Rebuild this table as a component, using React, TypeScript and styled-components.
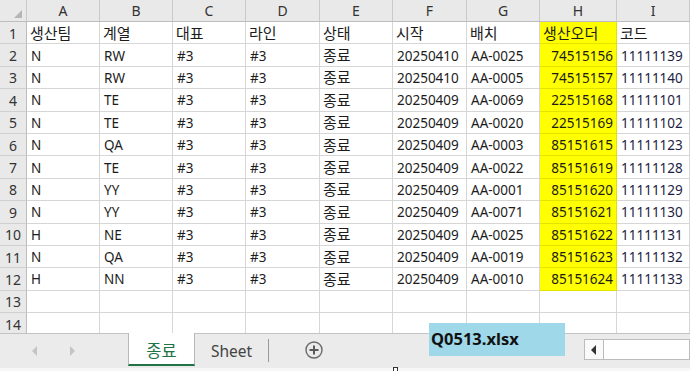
import React from "react";
import styled, { createGlobalStyle } from "styled-components";

/* -------------------------------------------------------------------------- */

const GlobalStyle = createGlobalStyle`
  html, body {
    margin: 0;
    padding: 0;
    background: #ffffff;
  }
  * {
    box-sizing: border-box;
  }
`;

const COLUMNS = ["A", "B", "C", "D", "E", "F", "G", "H", "I"];
// row header, A..I, and a trailing column that runs off the window
const COL_WIDTHS = "27px 73px 73px 73px 74px 73px 74px 73px 77px 73px 40px";

const ROWS: string[][] = [
  ["생산팀", "계열", "대표", "라인", "상태", "시작", "배치", "생산오더", "코드"],
  ["N", "RW", "#3", "#3", "종료", "20250410", "AA-0025", "74515156", "11111139"],
  ["N", "RW", "#3", "#3", "종료", "20250410", "AA-0005", "74515157", "11111140"],
  ["N", "TE", "#3", "#3", "종료", "20250409", "AA-0069", "22515168", "11111101"],
  ["N", "TE", "#3", "#3", "종료", "20250409", "AA-0020", "22515169", "11111102"],
  ["N", "QA", "#3", "#3", "종료", "20250409", "AA-0003", "85151615", "11111123"],
  ["N", "TE", "#3", "#3", "종료", "20250409", "AA-0022", "85151619", "11111128"],
  ["N", "YY", "#3", "#3", "종료", "20250409", "AA-0001", "85151620", "11111129"],
  ["N", "YY", "#3", "#3", "종료", "20250409", "AA-0071", "85151621", "11111130"],
  ["H", "NE", "#3", "#3", "종료", "20250409", "AA-0025", "85151622", "11111131"],
  ["N", "QA", "#3", "#3", "종료", "20250409", "AA-0019", "85151623", "11111132"],
  ["H", "NN", "#3", "#3", "종료", "20250409", "AA-0010", "85151624", "11111133"],
  ["", "", "", "", "", "", "", "", ""],
  ["", "", "", "", "", "", "", "", ""],
];

const isKorean = (s: string) => /[가-힣]/.test(s);

/* ------------------------------- Layout ----------------------------------- */

const Window = styled.div`
  position: relative;
  width: 690px;
  height: 371px;
  overflow: hidden;
  display: flex;
  flex-direction: column;
  font-family: "Noto Sans", "Noto Sans CJK KR", sans-serif;
  font-size: 13.5px;
  color: #1c1c1c;
  background: #ffffff;
`;

const Sheet = styled.div`
  height: 333px;
  flex-shrink: 0;
  overflow: hidden;
  display: grid;
  grid-template-columns: ${COL_WIDTHS};
  grid-template-rows: 22px;
  grid-auto-rows: 22.4px;
`;

/* ------------------------------- Cells ------------------------------------ */

const HeadCell = styled.div`
  background: #e9e9e9;
  border-right: 1px solid #c9c9c9;
  border-bottom: 1px solid #bdbdbd;
  display: flex;
  align-items: center;
  justify-content: center;
  color: #333;
  font-family: "Noto Sans", sans-serif;
  font-size: 14px;
`;

const Corner = styled(HeadCell)`
  align-items: flex-end;
  justify-content: flex-end;
  padding: 0 4px 3px 0;
`;

const RowNum = styled(HeadCell)`
  border-bottom: 1px solid #d0d0d0;
  border-right: 1px solid #bdbdbd;
  padding-top: 1px;
`;

const Cell = styled.div<{ $yellow?: boolean; $right?: boolean; $ink?: string; $ko?: boolean }>`
  background: ${(p) => (p.$yellow ? "#ffff00" : "#ffffff")};
  border-right: 1px solid ${(p) => (p.$yellow ? "#e3e300" : "#d6d6d6")};
  border-bottom: 1px solid ${(p) => (p.$yellow ? "#e3e300" : "#d6d6d6")};
  display: flex;
  align-items: center;
  justify-content: ${(p) => (p.$right ? "flex-end" : "flex-start")};
  padding: ${(p) => (p.$ko ? "0 3px 1px 3px" : "1px 3px 0 4px")};
  white-space: nowrap;
  overflow: hidden;
  font-size: ${(p) => (p.$ko ? "15px" : "13.5px")};
  color: ${(p) => p.$ink || "#1c1c1c"};
`;

/* ------------------------------ Tab bar ----------------------------------- */

const TabBar = styled.div`
  height: 35px;
  flex-shrink: 0;
  background: #ebebeb;
  border-top: 1px solid #c3c3c3;
  display: flex;
  align-items: stretch;
`;

const BottomStrip = styled.div`
  flex: 1;
  background: #f7f7f7;
`;

const NavArrows = styled.div`
  width: 128px;
  display: flex;
  align-items: center;
  padding-left: 32px;
  gap: 31px;
`;

const Tab = styled.div<{ $active?: boolean }>`
  width: ${(p) => (p.$active ? "67px" : "73px")};
  display: flex;
  align-items: center;
  justify-content: center;
  font-size: ${(p) => (p.$active ? "16.5px" : "15.5px")};
  margin-top: -1px;
  margin-bottom: 2px;
  padding-top: 2px;
  background: ${(p) => (p.$active ? "#ffffff" : "transparent")};
  color: ${(p) => (p.$active ? "#217346" : "#444")};
  border-left: ${(p) => (p.$active ? "1px solid #b8b8b8" : "none")};
  border-right: ${(p) => (p.$active ? "1px solid #b8b8b8" : "none")};
  border-bottom: ${(p) => (p.$active ? "2px solid #217346" : "none")};
`;

const TabSep = styled.div`
  width: 1px;
  background: #9a9a9a;
  margin: 5px 0 6px;
`;

const AddButton = styled.div`
  width: 54px;
  display: flex;
  align-items: center;
  justify-content: flex-end;
  padding-bottom: 2px;
`;

const Spacer = styled.div`
  flex: 1;
`;

const ScrollBox = styled.div`
  width: 106px;
  display: flex;
  align-items: center;
  padding-bottom: 3px;
`;

const ScrollButton = styled.div`
  width: 20px;
  height: 21px;
  background: #fafafa;
  border: 1px solid #bcbcbc;
  display: flex;
  align-items: center;
  justify-content: center;
`;

const ScrollTrack = styled.div`
  flex: 1;
  height: 21px;
  background: #ffffff;
  border: 1px solid #bcbcbc;
  border-left: none;
`;

/* ------------------------------ Overlays ---------------------------------- */

const FileLabel = styled.div`
  position: absolute;
  left: 429px;
  top: 323px;
  width: 136px;
  height: 33px;
  background: #9ed8e9;
  color: #111;
  font-family: "Noto Sans", sans-serif;
  font-weight: 700;
  font-size: 16.5px;
  display: flex;
  align-items: center;
  padding: 0 0 2px 2px;
`;

const CursorMark = styled.div`
  position: absolute;
  left: 393px;
  top: 367px;
  width: 5px;
  height: 5px;
  border: 1px solid #333;
  background: #fff;
`;

/* -------------------------------------------------------------------------- */

const Arrow = ({ dir, color }: { dir: "left" | "right"; color: string }) => (
  <svg width="6" height="10" viewBox="0 0 6 10">
    <path d={dir === "left" ? "M5 0 L0 5 L5 10 Z" : "M1 0 L6 5 L1 10 Z"} fill={color} />
  </svg>
);

const App = () => {
  return (
    <Window>
      <GlobalStyle />
      <Sheet>
        <Corner>
          <svg width="8" height="8" viewBox="0 0 8 8">
            <path d="M8 0 L8 8 L0 8 Z" fill="#b5b5b5" />
          </svg>
        </Corner>
        {COLUMNS.map((c) => (
          <HeadCell key={c}>{c}</HeadCell>
        ))}
        <HeadCell />
        {ROWS.map((row, r) => (
          <React.Fragment key={r}>
            <RowNum>{r + 1}</RowNum>
            {row.map((v, c) => (
              <Cell
                key={c}
                $ko={isKorean(v)}
                $yellow={c === 7 && r < 12}
                $right={c === 7 && r > 0}
                $ink={c === 8 && r > 0 ? "#1e1e44" : undefined}
              >
                {v}
              </Cell>
            ))}
            <Cell />
          </React.Fragment>
        ))}
      </Sheet>
      <TabBar>
        <NavArrows>
          <Arrow dir="left" color="#c4c4c4" />
          <Arrow dir="right" color="#c4c4c4" />
        </NavArrows>
        <Tab $active>종료</Tab>
        <Tab>Sheet</Tab>
        <TabSep />
        <AddButton>
          <svg width="18" height="18" viewBox="0 0 18 18">
            <circle cx="9" cy="9" r="8" fill="none" stroke="#6a6a6a" strokeWidth="1.4" />
            <path d="M9 4.5 V13.5 M4.5 9 H13.5" stroke="#5a5a5a" strokeWidth="2" />
          </svg>
        </AddButton>
        <Spacer />
        <ScrollBox>
          <ScrollButton>
            <Arrow dir="left" color="#333" />
          </ScrollButton>
          <ScrollTrack />
        </ScrollBox>
      </TabBar>
      <BottomStrip />
      <FileLabel>Q0513.xlsx</FileLabel>
      <CursorMark />
    </Window>
  );
};

export default App;
